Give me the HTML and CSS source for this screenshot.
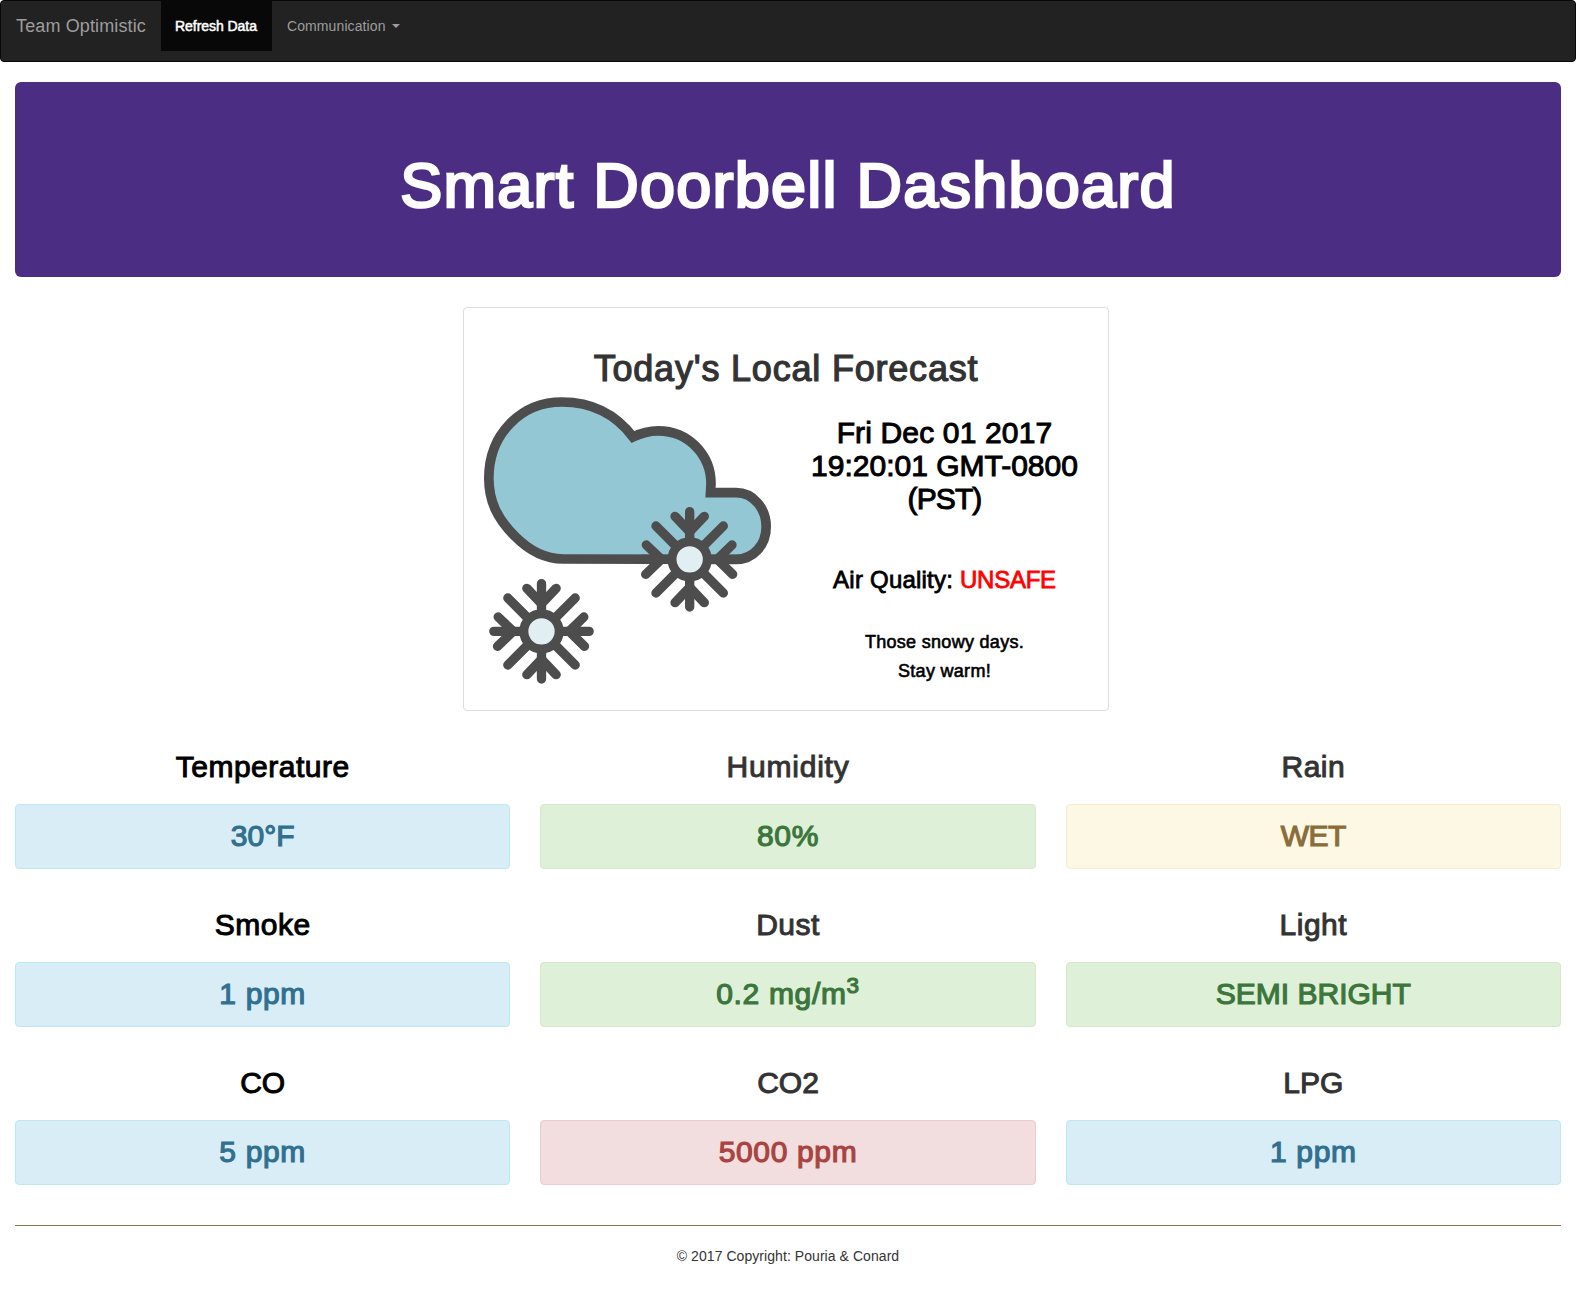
FILE: index.html
```html
<!DOCTYPE html>
<html lang="en">
<head>
<meta charset="utf-8">
<title>Smart Doorbell Dashboard</title>
<link rel="stylesheet" href="styles.css">
</head>
<body>
<nav class="navbar">
  <a class="brand">Team Optimistic</a>
  <a class="nav-item active">Refresh Data</a>
  <a class="nav-item">Communication<span class="caret"></span></a>
</nav>
<main class="container">
  <header class="jumbotron"><h1>Smart Doorbell Dashboard</h1></header>
  <section class="forecast">
    <h2>Today's Local Forecast</h2>
    <div class="forecast-body">
      <svg class="weather" viewBox="72 291 861 861" aria-hidden="true">
        <defs>
          <g id="flake" fill="none" stroke="#4d4d4d" stroke-width="28" stroke-linecap="round">
            <path d="M0-143V-60M0 60V143M-143 0H-60M60 0H143M-101-100L-40-39M101-100L40-39M-101 101L-40 40M101 101L40 40"/>
            <path d="M-44-129L0-83L44-129M-44 130L0 84L44 130M-130-43L-85 0L-132 45M127-43L83 0L129 45"/>
            <circle r="53" fill="#e1eff3" stroke-width="27"/>
          </g>
        </defs>
        <path fill="#93c7d4" stroke="#4d4d4d" stroke-width="29" d="M310 777C250 777 203 748 163 707C113 657 86.500 605 86.500 535C86.500 402 183 306 306 306C398 306 466 341 519 411C545 398 570 392.500 595 392.500C685 392.500 753 465 753 551L751.500 578H828C880 578 918.500 625 918.500 680C918.500 735 880 778 828 778Z"/>
        <use href="#flake" x="689" y="778"/>
        <use href="#flake" x="244.500" y="994"/>
      </svg>
      <div class="summary">
        <p class="date">Fri Dec 01 2017<br><span class="time">19:20:01 GMT-0800</span><br><span class="zone">(PST)</span></p>
        <p class="air">Air Quality: <span class="unsafe">UNSAFE</span></p>
        <p class="note">Those snowy days.<br>Stay warm!</p>
      </div>
    </div>
  </section>
  <section class="sensors">
    <div class="sensor first"><h3>Temperature</h3><div class="alert info degrees">30°F</div></div>
    <div class="sensor"><h3 class="wide">Humidity</h3><div class="alert success">80%</div></div>
    <div class="sensor"><h3>Rain</h3><div class="alert warning wet">WET</div></div>
    <div class="sensor first"><h3>Smoke</h3><div class="alert info">1 ppm</div></div>
    <div class="sensor"><h3>Dust</h3><div class="alert success">0.2 mg/m<sup>3</sup></div></div>
    <div class="sensor"><h3>Light</h3><div class="alert success caps">SEMI BRIGHT</div></div>
    <div class="sensor first"><h3 class="caps">CO</h3><div class="alert info">5 ppm</div></div>
    <div class="sensor"><h3 class="caps">CO2</h3><div class="alert danger">5000 ppm</div></div>
    <div class="sensor"><h3 class="caps">LPG</h3><div class="alert info">1 ppm</div></div>
  </section>
  <footer class="footer">© 2017 Copyright: Pouria &amp; Conard</footer>
</main>
</body>
</html>
```
FILE: styles.css
```css
* { box-sizing: border-box; }
body {
  margin: 0;
  background: #fff;
  color: #333;
  font: 14px/20px "Liberation Sans", Arial, sans-serif;
}
h1, h2, h3, p { margin: 0; font-weight: 400; }

.navbar {
  display: flex;
  align-items: flex-start;
  height: 62px;
  margin-bottom: 20px;
  border: 1px solid #080808;
  border-radius: 4px;
  background: #222;
  color: #9d9d9d;
}
.brand { padding: 15px; font-size: 18px; letter-spacing: .13px; width: 160px; white-space: nowrap; }
.nav-item { display: flex; align-items: center; height: 50px; padding: 0 15px; letter-spacing: .1px; }
.nav-item.active {
  width: 111px;
  padding-left: 14px;
  background: #080808;
  color: #fff;
  letter-spacing: -.05px;
  white-space: nowrap;
  -webkit-text-stroke: .5px;
}
.caret {
  margin-left: 6px;
  border-top: 4px solid;
  border-left: 4px solid transparent;
  border-right: 4px solid transparent;
}

.container { padding: 0 15px; }
.jumbotron {
  height: 195px;
  margin-bottom: 30px;
  padding: 69px 0 0;
  border-radius: 6px;
  background: #4b2e83;
  color: #fff;
  text-align: center;
}
.jumbotron h1 {
  font-size: 63px;
  line-height: 69px;
  letter-spacing: 1.23px;
  -webkit-text-stroke: 2.6px;
}

.forecast {
  width: 646px;
  height: 404px;
  margin: 0 auto 40px 448px;
  padding: 41px 15px 0 20px;
  border: 1px solid #ddd;
  border-radius: 4px;
  text-align: center;
}
.forecast h2 {
  margin-bottom: 8px;
  padding-right: 5px;
  font-size: 36px;
  line-height: 40px;
  letter-spacing: .8px;
  -webkit-text-stroke: 1.2px;
}
.forecast-body { display: flex; gap: 25px; }
.weather { flex: none; width: 287px; height: 287px; }
.summary { width: 297px; padding-top: 19px; color: #000; }
.date { font-size: 30px; line-height: 33px; letter-spacing: .15px; -webkit-text-stroke: 1px; }
.time { letter-spacing: 0; }
.zone { letter-spacing: -.9px; }
.air { margin-top: 52px; font-size: 24px; line-height: 26px; letter-spacing: .22px; -webkit-text-stroke: .8px; }
.unsafe { color: #f00; letter-spacing: -.25px; }
.note { margin-top: 35px; font-size: 18px; line-height: 29px; letter-spacing: .3px; -webkit-text-stroke: .6px; }

.sensors {
  display: grid;
  grid-template-columns: repeat(3, 1fr);
  gap: 40px 30px;
  margin-bottom: 40px;
  text-align: center;
}
.sensor h3 {
  margin: -1px 0 21px;
  font-size: 30px;
  line-height: 33px;
  letter-spacing: .5px;
  -webkit-text-stroke: 1px;
}
.first h3 { color: #000; }
.alert {
  height: 65px;
  padding: 14px 15px;
  border: 1px solid;
  border-radius: 4px;
  font-size: 30px;
  line-height: 33px;
  letter-spacing: .65px;
  -webkit-text-stroke: 1.2px;
}
.sensor .wide { letter-spacing: .8px; }
.sensor .caps { letter-spacing: 0; }
.degrees { letter-spacing: 0; }
.wet { letter-spacing: -.5px; }
.info { background: #d9edf7; border-color: #bce8f1; color: #31708f; }
.success { background: #dff0d8; border-color: #d6e9c6; color: #3c763d; }
.warning { background: #fcf8e3; border-color: #faebcc; color: #8a6d3b; }
.danger { background: #f2dede; border-color: #ebccd1; color: #a94442; }
.alert sup { position: relative; top: -.5em; font-size: 75%; line-height: 0; vertical-align: baseline; }

.footer { padding-top: 20px; border-top: 1px solid #85754d; letter-spacing: .06px; text-align: center; }
```
